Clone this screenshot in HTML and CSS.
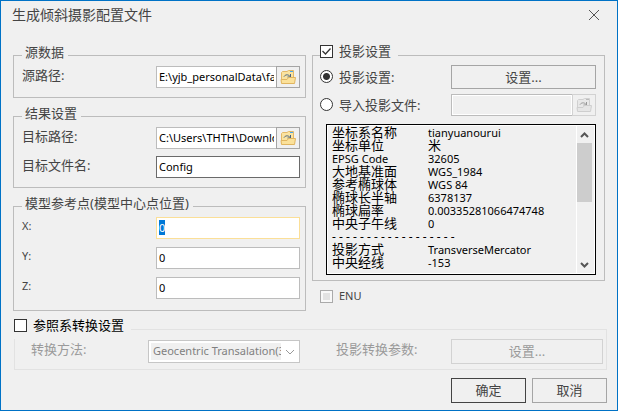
FILE: index.html
```html
<!DOCTYPE html>
<html lang="zh-CN">
  <head>
    <meta charset="UTF-8" />
    <meta name="viewport" content="width=device-width, initial-scale=1.0" />
    <title>生成倾斜摄影配置文件</title>
    <link rel="stylesheet" href="styles.css" />
  </head>
  <body>
    <!-- folder icon shared by the browse buttons -->
    <svg class="defs" width="0" height="0" aria-hidden="true">
      <symbol id="folder" viewBox="0 0 16 14">
        <path class="folder-back" d="M1.5 13V2.5L2.5 1.5H7L8.5 .5H13.5V9.5" />
        <path class="folder-tab" d="M10 1.5H13" />
        <path class="folder-arrow" d="M4 6.5C5.5 4.5 8 4.2 9.8 6.2M10.5 4V7H7.5" />
        <path class="folder-front" d="M1.5 13.5L1 9.5H7L8.5 7.5H15.5L14.5 13.5Z" />
      </symbol>
    </svg>

    <form class="dialog">
      <header class="titlebar">
        <h1>生成倾斜摄影配置文件</h1>
        <button type="button" class="close" aria-label="关闭">
          <svg width="12" height="12" viewBox="0 0 12 12">
            <path d="M1 1L11 11M11 1L1 11" />
          </svg>
        </button>
      </header>

      <main class="columns">
        <div class="column">
          <fieldset class="group">
            <legend>源数据</legend>
            <div class="row">
              <label for="source">源路径:</label>
              <div class="path">
                <input type="text" id="source" value="E:\yjb_personalData\fangzi" />
                <button type="button" class="browse" aria-label="浏览源路径">
                  <svg width="16" height="14"><use href="#folder" /></svg>
                </button>
              </div>
            </div>
          </fieldset>

          <fieldset class="group">
            <legend>结果设置</legend>
            <div class="row">
              <label for="target">目标路径:</label>
              <div class="path">
                <input type="text" id="target" value="C:\Users\THTH\Downloads" />
                <button type="button" class="browse" aria-label="浏览目标路径">
                  <svg width="16" height="14"><use href="#folder" /></svg>
                </button>
              </div>
            </div>
            <div class="row">
              <label for="filename">目标文件名:</label>
              <input type="text" id="filename" class="dark" value="Config" />
            </div>
          </fieldset>

          <fieldset class="group point">
            <legend>模型参考点(模型中心点位置)</legend>
            <div class="row">
              <label for="x">X:</label>
              <input type="text" id="x" value="0" />
            </div>
            <div class="row">
              <label for="y">Y:</label>
              <input type="text" id="y" value="0" />
            </div>
            <div class="row">
              <label for="z">Z:</label>
              <input type="text" id="z" value="0" />
            </div>
          </fieldset>
        </div>

        <div class="column">
          <fieldset class="group projection">
            <legend>
              <label class="check">
                <input type="checkbox" checked />
                投影设置
              </label>
            </legend>
            <div class="row">
              <label class="check">
                <input type="radio" name="projection" checked />
                投影设置:
              </label>
              <button type="button" class="btn">设置...</button>
            </div>
            <div class="row">
              <label class="check">
                <input type="radio" name="projection" />
                导入投影文件:
              </label>
              <div class="path">
                <input type="text" aria-label="投影文件" disabled />
                <button type="button" class="browse" aria-label="浏览投影文件" disabled>
                  <svg width="16" height="14"><use href="#folder" /></svg>
                </button>
              </div>
            </div>
            <div class="info">
              <table>
                <tr><th>坐标系名称</th><td>tianyuanourui</td></tr>
                <tr><th>坐标单位</th><td class="cjk">米</td></tr>
                <tr><th class="latin">EPSG Code</th><td>32605</td></tr>
                <tr><th>大地基准面</th><td>WGS_1984</td></tr>
                <tr><th>参考椭球体</th><td>WGS 84</td></tr>
                <tr><th>椭球长半轴</th><td>6378137</td></tr>
                <tr><th>椭球扁率</th><td>0.00335281066474748</td></tr>
                <tr><th>中央子午线</th><td>0</td></tr>
                <tr><td colspan="2" class="rule">- - - - - - - - - - - - - - - - - -</td></tr>
                <tr><th>投影方式</th><td>TransverseMercator</td></tr>
                <tr><th>中央经线</th><td>-153</td></tr>
              </table>
              <div class="scrollbar">
                <svg width="9" height="6" viewBox="0 0 9 6"><path d="M1 5L4.5 1.5L8 5" /></svg>
                <div class="thumb"></div>
                <svg width="9" height="6" viewBox="0 0 9 6"><path d="M1 1L4.5 4.5L8 1" /></svg>
              </div>
            </div>
          </fieldset>

          <label class="check enu">
            <input type="checkbox" disabled />
            ENU
          </label>
        </div>
      </main>

      <fieldset class="group transform">
        <legend>
          <label class="check">
            <input type="checkbox" />
            参照系转换设置
          </label>
        </legend>
        <div class="transform-row">
          <label for="method">转换方法:</label>
          <div class="select">
            <select id="method" disabled>
              <option>Geocentric Transalation(3-para)</option>
            </select>
            <svg width="10" height="6" viewBox="0 0 10 6"><path d="M1 1L5 5L9 1" /></svg>
          </div>
          <label for="params">投影转换参数:</label>
          <button type="button" id="params" class="btn" disabled>设置...</button>
        </div>
      </fieldset>

      <footer class="actions">
        <button type="submit" class="btn primary">确定</button>
        <button type="button" class="btn">取消</button>
      </footer>
    </form>

    <script>
      // start with the X value selected
      const x = document.getElementById("x");
      x.focus();
      x.select();
    </script>
  </body>
</html>
```
FILE: styles.css
```css
* {
  box-sizing: border-box;
}
body {
  margin: 0;
  font-family: "Noto Sans", "Noto Sans CJK SC", sans-serif;
  font-size: 13px;
  line-height: 16px;
  color: #444;
  background-color: #f0f0f0;
}
button,
input,
select {
  margin: 0;
  font: inherit;
  color: inherit;
}
svg {
  display: block;
  flex: none;
}
path {
  fill: none;
  stroke: #555;
}
.defs {
  position: absolute;
}
.dialog {
  display: flex;
  flex-direction: column;
  min-height: 100vh;
  border: 1px solid #0072c6;
}

/* title bar */
.titlebar {
  display: flex;
  justify-content: space-between;
  align-items: flex-start;
  height: 44px;
  padding: 5px 17px 0 11px;
}
h1 {
  margin: 0;
  font-size: 14px;
  font-weight: normal;
  line-height: 18px;
}
.close {
  padding: 3px 0;
  border: 0;
  background: none;
}

/* groups */
.columns {
  display: grid;
  grid-template-columns: 1fr 1fr;
  gap: 6px;
  padding: 0 12px;
}
.column {
  display: flex;
  flex-direction: column;
  gap: 8px;
  min-width: 0;
}
.group {
  display: flex;
  flex-direction: column;
  gap: 7px;
  min-width: 0;
  margin: 0;
  padding: 1px 5px 9px 8px;
  border: 1px solid #bcbcbc;
}
legend {
  height: 20px;
  padding: 0 4px 0 3px;
  line-height: 14px;
  white-space: nowrap;
}
.row {
  display: grid;
  grid-template-columns: 134px 1fr;
  align-items: center;
}
.row > label {
  padding-bottom: 4px;
}
.point {
  gap: 8px;
  padding-bottom: 11px;
}
.point .row label {
  font-size: 11px;
}

/* controls */
input[type="text"] {
  width: 100%;
  min-width: 0;
  height: 22px;
  padding: 0 2px 2px;
  border: 1px solid #bcbcbc;
  font-size: 11px;
  color: #000;
  background-color: #fff;
}
input[type="text"].dark {
  border-color: #6a6a6a;
}
input[type="text"]:focus {
  border-color: #fbdf97;
  outline: 0;
  caret-color: #e07b39;
}
input[type="text"]:disabled {
  background-color: #f0f0f0;
  box-shadow: inset 0 0 0 1px #fff;
}
::selection {
  color: #fff;
  background-color: #0078d7;
}
.path {
  display: flex;
}
.path input[type="text"] {
  border-right: 0;
}
.browse {
  display: flex;
  flex: none;
  align-items: center;
  justify-content: center;
  width: 24px;
  height: 22px;
  padding: 0;
  border: 1px solid #a5a5a5;
  background-color: #f0f0f0;
}
.browse:disabled {
  border-color: #d2d2d2;
  filter: grayscale(1);
}
.browse:disabled svg {
  opacity: 0.6;
}
.folder-back {
  fill: #fbe3a0;
  stroke: #e3b866;
}
.folder-tab {
  stroke: #4aa8e8;
}
.folder-arrow {
  stroke: #46617f;
}
.folder-front {
  fill: #fbe19a;
  stroke: #e0b560;
}
.btn {
  height: 25px;
  padding: 0 0 1px;
  border: 1px solid #a5a5a5;
  background-color: #f0f0f0;
}
.btn:disabled {
  border-color: #d2d2d2;
}
.primary {
  border-color: #444;
}
.check {
  display: flex;
  align-items: center;
  gap: 6px;
}
.check input {
  flex: none;
  width: 13px;
  height: 13px;
  appearance: none;
  border: 1px solid #333;
  background-color: #fff;
}
.check input[type="radio"] {
  border-radius: 50%;
}
.check input[type="radio"]:checked {
  background-image: radial-gradient(circle, #333 3px, transparent 4px);
}
.check input[type="checkbox"]:checked {
  background-image: url("data:image/svg+xml,%3Csvg xmlns='http://www.w3.org/2000/svg' viewBox='0 0 11 11'%3E%3Cpath d='M1.5 5L4.5 8L9.5 2.5' fill='none' stroke='%23333' stroke-width='1.3'/%3E%3C/svg%3E");
}
.check input:disabled {
  border-color: #aaa;
  background-color: #e2e2e2;
  box-shadow: inset 0 0 0 2px #f8f8f8;
}
legend .check {
  line-height: 13px;
}

/* projection */
.projection {
  gap: 5px;
  padding: 0 8px 5px 7px;
}
.projection legend {
  padding: 0 7px 0 0;
}
.projection .row {
  grid-template-columns: 131px 1fr;
}
.projection .row > label {
  padding-bottom: 1px;
}
.projection .btn {
  height: 24px;
}
.info {
  display: flex;
  justify-content: space-between;
  height: 151px;
  margin: 3px 0 0 6px;
  padding: 1px 2px 1px 1px;
  border: 1px solid #000;
  box-shadow: inset 0 0 0 1px #fff;
  line-height: 13px;
  color: #000;
  overflow: hidden;
}
table {
  align-self: flex-start;
  margin: 0 0 0 4px;
  border-collapse: collapse;
}
tr {
  height: 13px;
}
th,
td {
  height: 13px;
  padding: 0;
  font-weight: normal;
  text-align: left;
  white-space: nowrap;
}
th {
  width: 96px;
}
td,
.latin {
  font-size: 11px;
}
.cjk {
  font-size: 13px;
}
td.rule {
  font-size: 12px;
}
.scrollbar {
  display: flex;
  flex-direction: column;
  align-items: center;
  width: 17px;
  padding: 6px 1px 5px 0;
  border-left: 1px solid #fff;
}
.scrollbar path {
  stroke-width: 2;
}
.thumb {
  width: 15px;
  height: 59px;
  margin: 5px 0 auto;
  background-color: #cdcdcd;
}
.enu {
  padding-left: 8px;
  font-size: 11px;
  line-height: 14px;
}

/* transform */
.transform {
  margin: 8px 10px 0 13px;
  padding: 0 3px 5px 16px;
  border-color: #e2e2e2;
  color: #9a9a9a;
}
.transform legend {
  margin-left: -17px;
  padding: 0 7px 0 0;
  color: #000;
  background-color: #f0f0f0;
}
.transform-row {
  display: grid;
  grid-template-columns: 117px 1fr 36px 115px 1fr;
  align-items: center;
}
.transform-row label {
  padding-bottom: 6px;
}
.transform-row label:nth-of-type(2) {
  grid-column: 4;
}
.select {
  display: grid;
  grid-template-columns: 1fr 18px;
  align-items: center;
  height: 23px;
  border: 1px solid #c6c6c6;
  background-color: #fff;
}
.select select {
  grid-area: 1 / 1 / 2 / 2;
  min-width: 0;
  width: calc(100% - 2px);
  height: 17px;
  margin-left: 2px;
  padding: 0 0 1px 2px;
  border: 0;
  appearance: none;
  font-size: 11px;
  color: #808080;
  opacity: 1;
  background-color: #f0f0f0;
  text-overflow: clip;
}
.select svg {
  justify-self: center;
}
.select path {
  stroke: #999;
}

/* footer */
.actions {
  display: flex;
  justify-content: flex-end;
  gap: 6px;
  padding: 8px 10px 7px;
}
.actions .btn {
  width: 75px;
}
```
